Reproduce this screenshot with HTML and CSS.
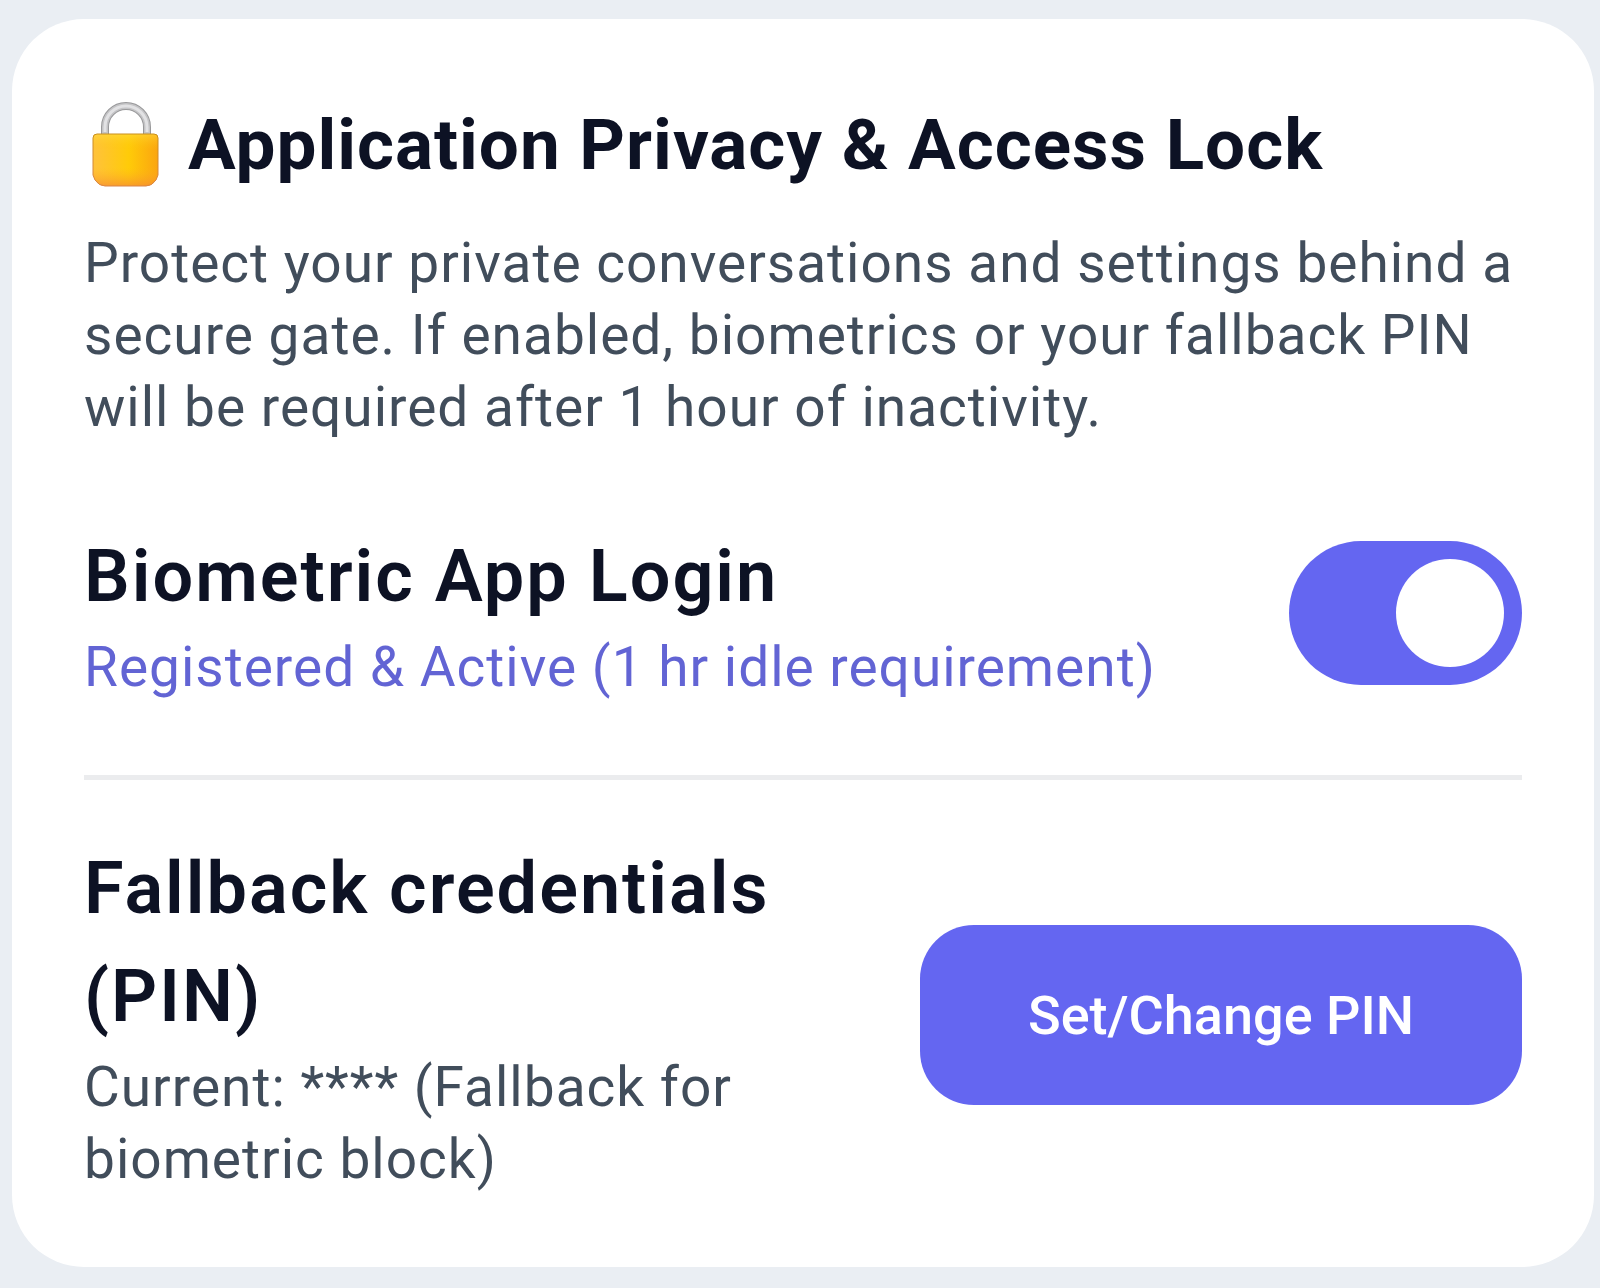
FILE: index.html
```html
<!DOCTYPE html>
<html lang="en">
<head>
<meta charset="utf-8">
<meta name="viewport" content="width=device-width, initial-scale=1">
<title>Application Privacy &amp; Access Lock</title>
<link rel="stylesheet" href="styles.css">
</head>
<body>
<main class="card">
  <header class="card-header">
    <svg class="lock" viewBox="0 0 68 86" aria-hidden="true">
      <defs>
        <linearGradient id="body" x1="0" y1="0" x2="1" y2="0">
          <stop offset="0" stop-color="#ffc23c"/>
          <stop offset=".55" stop-color="#ffcb08"/>
          <stop offset="1" stop-color="#fba510"/>
        </linearGradient>
        <linearGradient id="shade" x1="0" y1="0" x2="0" y2="1">
          <stop offset="0" stop-color="#ffe14a" stop-opacity=".5"/>
          <stop offset=".3" stop-color="#ffc60a" stop-opacity="0"/>
          <stop offset=".65" stop-color="#ffb020" stop-opacity="0"/>
          <stop offset="1" stop-color="#f58a35" stop-opacity=".7"/>
        </linearGradient>
        <linearGradient id="edge" x1="0" y1="0" x2="0" y2="1">
          <stop offset="0" stop-color="#c98f1c"/>
          <stop offset="1" stop-color="#d98548"/>
        </linearGradient>
      </defs>
      <path d="M13 33V25a21 21 0 0 1 42 0v8" fill="none" stroke="#98989a" stroke-width="8"/>
      <path d="M13 33V25a21 21 0 0 1 42 0v8" fill="none" stroke="#c4c4c6" stroke-width="6"/>
      <path d="M13 30V25a21 21 0 0 1 42 0v5" fill="none" stroke="#e2e2e4" stroke-width="3"/>
      <path d="M5 32H62Q66 32 66 36V73L64 78Q60 84 54 84H13Q7 84 3 78L1 73V36Q1 32 5 32Z" fill="url(#body)"/>
      <path d="M5 32H62Q66 32 66 36V73L64 78Q60 84 54 84H13Q7 84 3 78L1 73V36Q1 32 5 32Z" fill="url(#shade)" stroke="url(#edge)"/>
    </svg>
    <h1 class="title">Application Privacy &amp; Access Lock</h1>
  </header>
  <p class="text intro">Protect your private conversations and settings behind a secure gate. If enabled, biometrics or your fallback PIN will be required after 1 hour of inactivity.</p>
  <section class="row">
    <div class="info">
      <label class="subtitle" for="biometric">Biometric App Login</label>
      <p class="text status">Registered &amp; Active (1 hr idle requirement)</p>
    </div>
    <input class="switch" type="checkbox" role="switch" id="biometric" checked>
  </section>
  <hr class="divider">
  <section class="row">
    <div class="info">
      <h2 class="subtitle">Fallback credentials (PIN)</h2>
      <p class="text">Current: **** (Fallback for biometric block)</p>
    </div>
    <button class="button" type="button">Set/Change PIN</button>
  </section>
</main>
</body>
</html>
```
FILE: styles.css
```css
* {
  box-sizing: border-box;
  margin: 0;
}

body {
  padding: 19px 6px 20px 12px;
  background: #eaeef3;
  color: #0d1224;
  font-family: Roboto, "Liberation Sans", sans-serif;
}

.card {
  padding: 72px;
  border-radius: 72px;
  background: #fff;
}

.card-header {
  display: flex;
  align-items: center;
  gap: 28px;
  height: 108px;
  margin-bottom: 28px;
  padding-left: 8px;
}

.lock {
  flex: none;
  width: 68px;
  height: 86px;
}

.title {
  font-size: 71px;
  font-weight: 700;
  line-height: 108px;
  letter-spacing: 1px;
}

.text {
  color: #414d5b;
  font-size: 55px;
  line-height: 72px;
  letter-spacing: 1px;
}

.intro {
  margin-bottom: 80px;
}

.row {
  display: flex;
  align-items: center;
  justify-content: space-between;
  gap: 72px;
}

.info {
  flex: 0 1 auto;
}

.subtitle {
  display: block;
  font-size: 72px;
  font-weight: 600;
  line-height: 108px;
  letter-spacing: 2px;
}

.status {
  color: #6264d4;
}

.switch {
  flex: none;
  display: flex;
  align-items: center;
  justify-content: flex-end;
  width: 233px;
  height: 144px;
  padding: 18px;
  border-radius: 72px;
  background: #6466f1;
  appearance: none;
}

.switch::before {
  width: 108px;
  height: 108px;
  border-radius: 50%;
  background: #fff;
  content: "";
}

.switch:not(:checked) {
  justify-content: flex-start;
  background: #cbd5e1;
}

.divider {
  height: 5px;
  margin: 72px 0 55px;
  border: 0;
  background: #ebecee;
}

.button {
  flex: none;
  width: 602px;
  height: 180px;
  border: 0;
  border-radius: 54px;
  background: #6466f1;
  color: #fff;
  font: 500 54px Roboto, "Liberation Sans", sans-serif;
}
```
